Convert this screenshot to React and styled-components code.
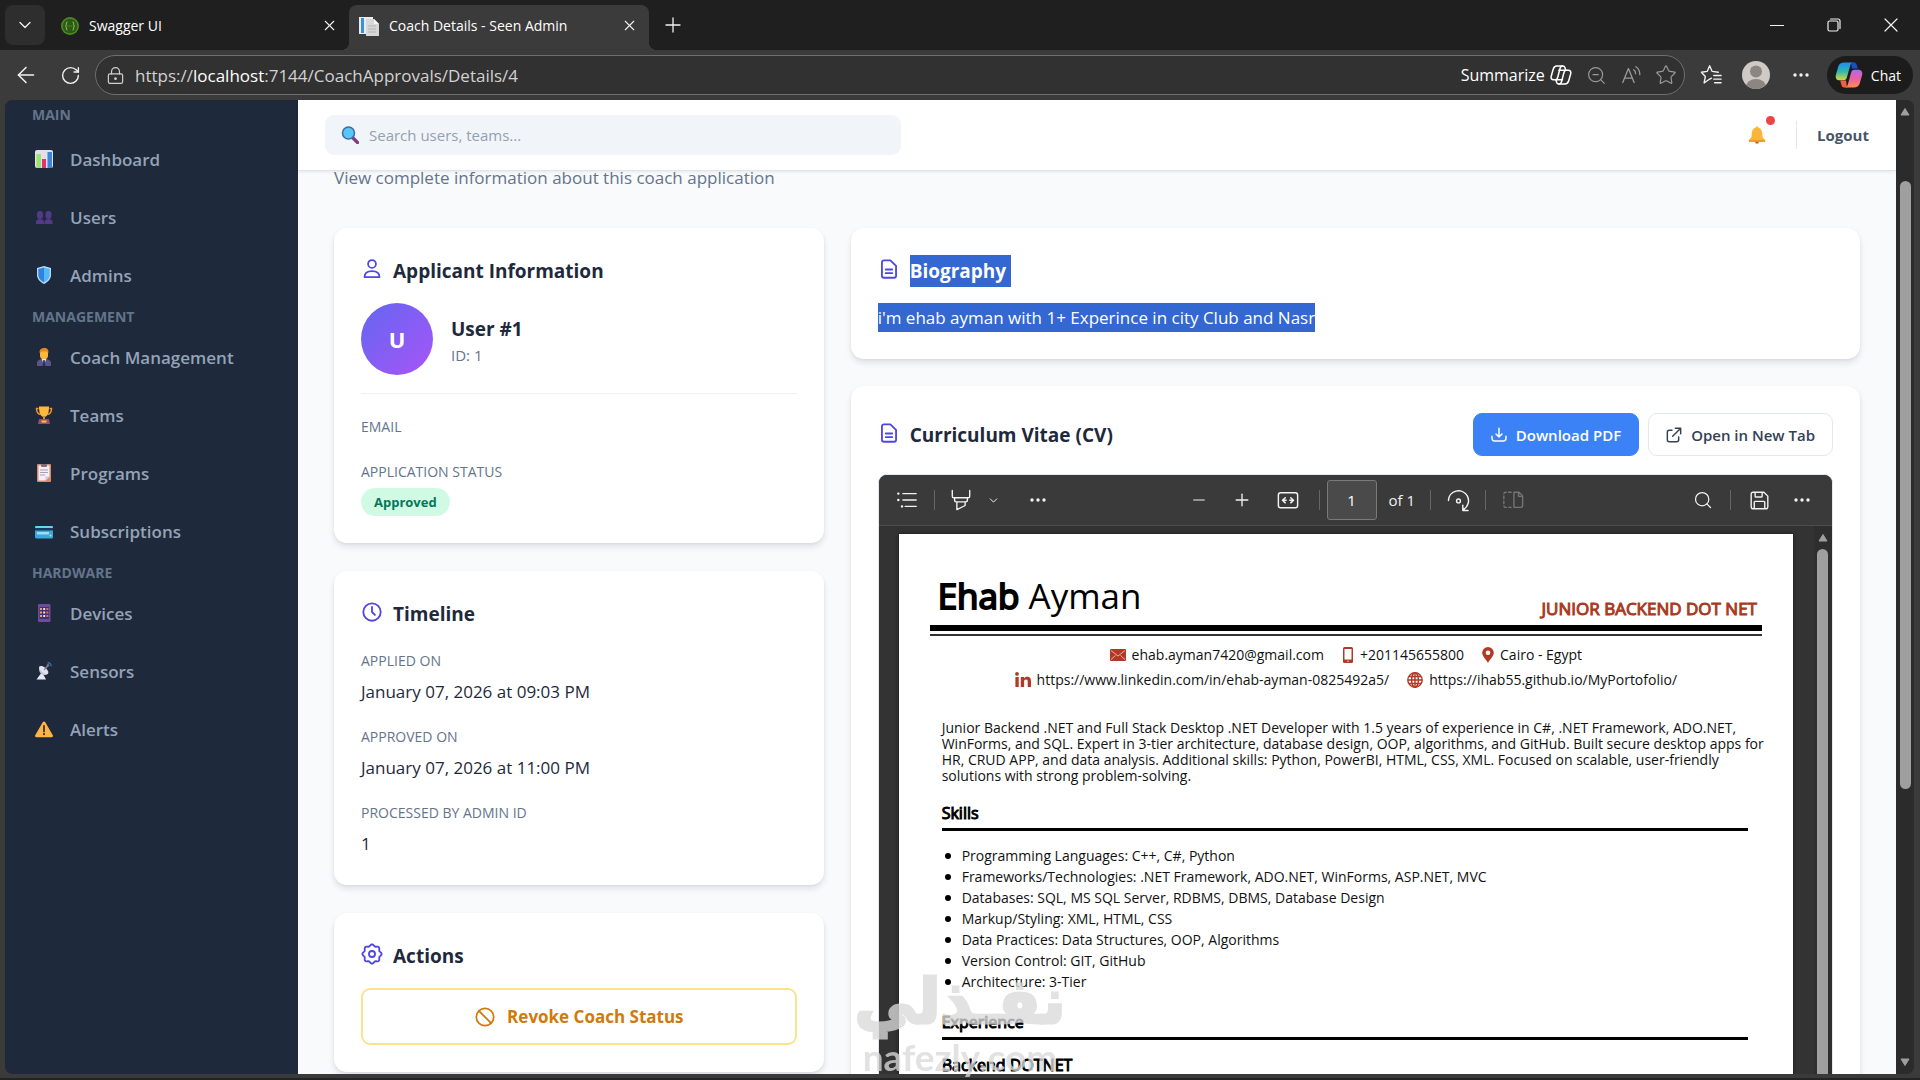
import React from "react";
import styled, { createGlobalStyle, css } from "styled-components";
import {
  ArrowLeft, ChevronDown, X, Plus, Minus, RotateCw, LockKeyhole, ZoomOut, Star, Search,
} from "lucide-react";

const ui = `"Open Sans", "Noto Sans", sans-serif`;

const GlobalStyle = createGlobalStyle`
  * { box-sizing: border-box; }
  body { margin: 0; background: #3b3b3b; font-family: ${ui}; }
  button, input { font-family: inherit; }
  h1, h2, h3, p, ul, dl, dd, dt { margin: 0; padding: 0; }
`;

/* ---------- browser frame ---------- */

const Window = styled.div`
  display: flex;
  flex-direction: column;
  height: 100vh;
  background: #3b3b3b;
  overflow: hidden;
`;

const TabStrip = styled.div`
  display: flex;
  align-items: flex-end;
  flex: none;
  height: 50px;
  padding-left: 5px;
  background: #1f1f1f;
  color: #fff;
`;

const IconButton = styled.button`
  display: flex;
  align-items: center;
  justify-content: center;
  flex: none;
  width: ${(p) => p.$w || 40}px;
  height: ${(p) => p.$h || 40}px;
  padding: 0;
  border: 0;
  border-radius: 8px;
  background: ${(p) => p.$bg || "transparent"};
  color: ${(p) => p.$color || "#f2f2f2"};
`;

const TabMenu = styled(IconButton)`
  align-self: center;
`;

const Tabs = styled.div`
  display: flex;
  padding-left: 4px;
`;

const Tab = styled.div`
  position: relative;
  display: flex;
  align-items: center;
  gap: 10px;
  width: 300px;
  height: 45px;
  padding: 0 0 4px ${(p) => (p.$active ? 10 : 12)}px;
  font-size: 14px;
  ${(p) => p.$active && css`
    background: #3b3b3b;
    border-radius: 8px 8px 0 0;
    &::before, &::after {
      content: "";
      position: absolute;
      bottom: 0;
      width: 8px;
      height: 8px;
    }
    &::before { left: -8px; background: radial-gradient(circle at 0 0, transparent 8px, #3b3b3b 8px); }
    &::after { right: -8px; background: radial-gradient(circle at 100% 0, transparent 8px, #3b3b3b 8px); }
  `}
`;

const TabTitle = styled.span`
  flex: 1;
  white-space: nowrap;
`;

const WindowControls = styled.div`
  display: flex;
  align-self: stretch;
  align-items: center;
  margin-left: auto;
`;

const Toolbar = styled.div`
  display: flex;
  align-items: center;
  flex: none;
  height: 50px;
  padding: 0 7px 0 3px;
  color: #fff;
`;

const AddressBar = styled.div`
  display: flex;
  align-items: center;
  flex: 1;
  height: 40px;
  margin: 0 4px 0 2px;
  padding-left: 10px;
  border: 1px solid #6e6e6e;
  border-radius: 20px;
  background: #313131;
`;

const Url = styled.span`
  flex: 1;
  margin-left: 10px;
  font-size: 17px;
  color: #d2d2d2;
  b { font-weight: 400; color: #fff; }
`;

const Summarize = styled.button`
  display: flex;
  align-items: center;
  gap: 4px;
  margin-right: 6px;
  padding: 0;
  border: 0;
  background: none;
  font-size: 16px;
  color: #fff;
`;

const ChatButton = styled.button`
  display: flex;
  align-items: center;
  gap: 8px;
  height: 38px;
  margin-left: 3px;
  padding: 0 12px 0 8px;
  border: 0;
  border-radius: 19px;
  background: #1c1c1c;
  font-size: 14px;
  color: #fff;
`;

const Viewport = styled.div`
  display: flex;
  flex: 1;
  min-height: 0;
  margin: 0 6px 0 5px;
  border-radius: 8px;
  overflow: hidden;
  background: #2b2b2b;
`;

const FrameEdge = styled.div`
  flex: none;
  height: 6px;
  border-bottom: 2px solid #232323;
  background: #3a3a3a;
`;

const ScrollTrack = styled.div`
  display: flex;
  flex-direction: column;
  align-items: center;
  flex: none;
  gap: ${(p) => p.$gap || 0}px;
  width: 18px;
  padding: 7px 0;
  background: ${(p) => p.$bg || "#2b2b2b"};
`;

const Thumb = styled.div`
  width: 11px;
  border-radius: 6px;
  background: #9f9f9f;
  flex: ${(p) => p.$grow};
`;

const Spacer = styled.div`
  flex: ${(p) => p.$grow};
`;

/* ---------- application shell ---------- */

const Sidebar = styled.nav`
  flex: none;
  width: 293px;
  padding-top: 3px;
  background: #1e293b;
`;

const SideLabel = styled.h3`
  height: 24px;
  margin-bottom: ${(p) => (p.$first ? 3 : 0)}px;
  padding-left: 27px;
  font-size: 14px;
  font-weight: 700;
  line-height: ${(p) => (p.$first ? 24 : 26)}px;
  color: #64748b;
`;

const SideItem = styled.a`
  display: flex;
  align-items: center;
  gap: 17px;
  height: 58px;
  padding-left: 30px;
  font-size: 17px;
  font-weight: 600;
  color: #94a3b8;
  text-decoration: none;
`;

const Main = styled.div`
  display: flex;
  flex-direction: column;
  flex: 1;
  min-width: 0;
  background: #f8fafc;
`;

const Header = styled.header`
  display: flex;
  align-items: center;
  flex: none;
  height: 71px;
  padding: 0 27px;
  border-bottom: 1px solid #dfe4ea;
  background: #fff;
  box-shadow: 0 1px 3px rgba(0, 0, 0, 0.08);
  z-index: 1;
`;

const SearchBox = styled.label`
  display: flex;
  align-items: center;
  gap: 10px;
  flex: 0 1 576px;
  height: 40px;
  padding-left: 16px;
  border-radius: 9px;
  background: #f1f5f9;
`;

const SearchInput = styled.input`
  flex: 1;
  min-width: 0;
  padding: 0;
  border: 0;
  outline: 0;
  background: none;
  font-size: 15px;
  &::placeholder { color: #94a0af; opacity: 1; }
`;

const Bell = styled.button`
  position: relative;
  display: flex;
  margin-left: auto;
  padding: 0;
  border: 0;
  background: none;
  &::after {
    content: "";
    position: absolute;
    top: -10px;
    right: -9px;
    width: 9px;
    height: 9px;
    border-radius: 50%;
    background: #ef4444;
  }
`;

const Logout = styled.button`
  margin-left: 30px;
  padding: 4px 0 4px 20px;
  border: 0;
  border-left: 1px solid #e2e8f0;
  background: none;
  font-size: 15px;
  font-weight: 700;
  line-height: 20px;
  color: #475569;
`;

const Content = styled.main`
  flex: 1;
  min-height: 0;
  padding: 0 36px;
  overflow: hidden;
`;

const Subtitle = styled.p`
  margin-bottom: 43px;
  font-size: 17px;
  line-height: 14px;
  color: #64748b;
`;

const Columns = styled.div`
  display: grid;
  grid-template-columns: minmax(0, 49fr) minmax(0, 101fr);
  gap: 27px;
  align-items: start;
`;

const Column = styled.div`
  display: flex;
  flex-direction: column;
  gap: ${(p) => p.$gap}px;
`;

const Card = styled.section`
  padding: 27px;
  border-radius: 13px;
  background: #fff;
  box-shadow: 0 4px 6px rgba(15, 23, 42, 0.1), 0 1px 3px rgba(15, 23, 42, 0.05);
`;

const CardTitle = styled.h2`
  display: flex;
  align-items: center;
  gap: 10px;
  margin-bottom: ${(p) => (p.$inRow ? 0 : 16)}px;
  font-size: 19px;
  font-weight: 700;
  line-height: 32px;
  color: #1e293b;
  svg { color: #4f46e5; flex: none; margin-bottom: 4px; }
`;

const Selected = styled.mark`
  background: #3367d1;
  color: #fff;
  padding-right: ${(p) => p.$trail || 0}px;
`;

const Profile = styled.div`
  display: flex;
  align-items: center;
  gap: 18px;
  margin-bottom: 23px;
  padding-bottom: 18px;
  border-bottom: 1px solid #edf0f4;
`;

const Avatar = styled.div`
  display: flex;
  align-items: center;
  justify-content: center;
  width: 72px;
  height: 72px;
  border-radius: 50%;
  background: linear-gradient(135deg, #6366f1, #a855f7);
  font-size: 22px;
  font-weight: 700;
  color: #fff;
`;

const UserName = styled.h3`
  font-size: 19px;
  font-weight: 700;
  line-height: 32px;
  color: #1e293b;
`;

const UserId = styled.p`
  font-size: 15px;
  line-height: 20px;
  color: #64748b;
`;

const Fields = styled.dl`
  display: flex;
  flex-direction: column;
  gap: ${(p) => p.$gap}px;
  padding-top: ${(p) => p.$top || 0}px;
`;

const FieldLabel = styled.dt`
  font-size: 14px;
  font-weight: 500;
  line-height: 20px;
  color: #64748b;
`;

const FieldValue = styled.dd`
  padding-top: 6px;
  font-size: 17px;
  line-height: 29px;
  color: #1e293b;
`;

const Badge = styled.span`
  display: flex;
  align-items: center;
  width: fit-content;
  height: 28px;
  padding: 0 13px;
  border-radius: 14px;
  background: #d1fae5;
  font-size: 13px;
  font-weight: 700;
  color: #047857;
`;

const RevokeButton = styled.button`
  display: flex;
  align-items: center;
  justify-content: center;
  gap: 11px;
  width: 100%;
  height: 57px;
  border: 2px solid #fbe38e;
  border-radius: 9px;
  background: #fff;
  font-size: 17px;
  font-weight: 700;
  color: #d07a0c;
`;

const Bio = styled.p`
  font-size: 17px;
  line-height: 29px;
  mark { display: inline-block; }
`;

const CvHeader = styled.div`
  display: flex;
  align-items: center;
  justify-content: space-between;
  margin-bottom: 18px;
`;

const Buttons = styled.div`
  display: flex;
  gap: 9px;
`;

const LinkButton = styled.a`
  display: flex;
  align-items: center;
  gap: 9px;
  height: 43px;
  padding: 0 17px;
  border: 1px solid ${(p) => (p.$primary ? "#3b82f6" : "#e2e8f0")};
  border-radius: 9px;
  background: ${(p) => (p.$primary ? "#3b82f6" : "#fff")};
  font-size: 15px;
  font-weight: 600;
  color: ${(p) => (p.$primary ? "#fff" : "#334155")};
  text-decoration: none;
`;

/* ---------- pdf viewer ---------- */

const Viewer = styled.div`
  border: 1px solid #e2e8f0;
  border-radius: 9px 9px 0 0;
  overflow: hidden;
  background: #333;
`;

const PdfToolbar = styled.div`
  display: grid;
  grid-template-columns: 1fr auto 1fr;
  align-items: center;
  height: 51px;
  padding: 0 8px;
  border-bottom: 1px solid #4d4d4d;
  background: #3a3a3a;
  color: #f0f0f0;
`;

const Group = styled.div`
  display: flex;
  align-items: center;
  justify-content: ${(p) => (p.$end ? "flex-end" : "flex-start")};
`;

const Divider = styled.span`
  width: 1px;
  height: 20px;
  margin: 0 7px;
  background: #666;
`;

const Gap = styled.span`
  width: 10px;
`;

const PageInput = styled.input`
  width: 50px;
  height: 40px;
  border: 1px solid #7a7a7a;
  border-radius: 3px;
  background: #4a4a4a;
  text-align: center;
  font-size: 15px;
  color: #fff;
`;

const PageCount = styled.span`
  margin: 0 8px 0 12px;
  font-size: 15px;
`;

const PdfBody = styled.div`
  display: flex;
  height: 700px;
`;

const Sheet = styled.article`
  flex: 1;
  min-width: 0;
  margin: 8px 21px 0 20px;
  padding: 38px 31px 0;
  background: #fff;
  color: #111;
  font-size: 14px;
  box-shadow: 0 0 4px rgba(0, 0, 0, 0.5);
`;

const CvTop = styled.div`
  display: flex;
  align-items: flex-end;
  justify-content: space-between;
  height: 53px;
  padding: 0 5px 0 8px;
`;

const CvName = styled.h1`
  align-self: flex-start;
  font-size: 35px;
  font-weight: 400;
  line-height: 48px;
  color: #000;
  b { font-weight: 400; -webkit-text-stroke: 2px #000; }
`;

const CvRole = styled.p`
  font-size: 17px;
  line-height: 33px;
  color: #a93a22;
  -webkit-text-stroke: 1px #a93a22;
`;

const DoubleRule = styled.div`
  height: 11px;
  margin-bottom: 6px;
  border-top: 6px solid #000;
  border-bottom: 2px solid #333;
`;

const ContactRow = styled.div`
  display: flex;
  justify-content: center;
  gap: 18px;
`;

const Contact = styled.span`
  display: flex;
  align-items: center;
  gap: 6px;
  line-height: 25px;
`;

const CvSection = styled.div`
  padding: 0 14px 0 12px;
`;

const Summary = styled.p`
  margin-top: 28px;
  line-height: 16px;
  white-space: nowrap;
`;

const CvHeading = styled.h2`
  margin-top: ${(p) => p.$top}px;
  padding: 0 0 4px;
  border-bottom: 3px solid #000;
  font-size: 16px;
  font-weight: 400;
  line-height: 22px;
  color: #000;
  -webkit-text-stroke: 1px #000;
`;

const CvList = styled.ul`
  padding: 14px 0 0 20px;
  line-height: 21px;
  list-style: none;
  li { position: relative; }
  li::before {
    content: "";
    position: absolute;
    left: -17px;
    top: 8px;
    width: 6px;
    height: 6px;
    border-radius: 50%;
    background: #000;
  }
`;

const CvJob = styled.h3`
  margin-top: 14px;
  font-size: 16px;
  font-weight: 400;
  line-height: 22px;
  color: #000;
  -webkit-text-stroke: 1px #000;
`;

const Watermark = styled.div`
  position: fixed;
  left: 853px;
  bottom: 0;
  width: 214px;
  height: 112px;
  color: #dadada;
  opacity: 0.78;
  text-align: center;
  pointer-events: none;
  z-index: 5;
`;

const WatermarkArabic = styled.div`
  height: 72px;
  font-family: "DejaVu Sans", sans-serif;
  font-size: 62px;
  font-weight: 700;
  line-height: 68px;
  white-space: nowrap;
  -webkit-text-stroke: 3px #dadada;
`;

const WatermarkLatin = styled.div`
  font-family: Lato, sans-serif;
  font-size: 37px;
  font-weight: 700;
  line-height: 34px;
`;

/* ---------- drawings ---------- */

const Icon = ({ size = 20, box = 24, stroke = 1.6, children, ...rest }) => (
  <svg width={size} height={size} viewBox={`0 0 ${box} ${box}`} fill="none" stroke="currentColor"
    strokeWidth={stroke} strokeLinecap="round" strokeLinejoin="round" aria-hidden="true" {...rest}>
    {children}
  </svg>
);

const Art = ({ size = 18, children }) => (
  <svg width={size} height={size} viewBox="0 0 18 18" aria-hidden="true">{children}</svg>
);

const art = {
  chart: (
    <Art>
      <rect width="18" height="18" rx="2" fill="#e4dfea" />
      <rect x="1.5" y="4" width="4.5" height="14" fill="#9be36d" />
      <rect x="7" y="9" width="4" height="9" fill="#e8306f" />
      <rect x="12.5" y="2" width="4.5" height="16" fill="#3b88d8" />
    </Art>
  ),
  users: (
    <Art>
      <g fill="#533a86">
        <rect x="2" y="3" width="6" height="8" rx="3" /><rect x="10.5" y="3" width="6" height="8" rx="3" />
        <path d="M1 16v-2c0-2 2-3 4-3s4 1 4 3v2zM9.5 16v-2c0-2 2-3 4-3s4 1 4 3v2z" />
      </g>
    </Art>
  ),
  shield: (
    <Art>
      <path d="M9 0l7 2v7c0 4-3 7-7 9-4-2-7-5-7-9V2z" fill="#b9dcf5" />
      <path d="M9 1.5L3.3 3v6c0 3 2.500 5.800 5.700 7.400z" fill="#2f83e0" />
      <path d="M9 1.500L14.700 3v6c0 3-2.500 5.800-5.700 7.400z" fill="#55b8fa" />
    </Art>
  ),
  coach: (
    <Art>
      <path d="M2 18v-3c0-3 3-4 7-4s7 1 7 4v3z" fill="#5b5587" />
      <path d="M6.500 10.500h5L9 17z" fill="#dfe3f2" />
      <path d="M8.300 12h1.400l.6 6H7.700z" fill="#27324f" />
      <rect x="5" y="1.500" width="8" height="9.500" rx="3.500" fill="#fbb838" />
      <path d="M4.600 5C4 1 7 0 9.500 0S14 1.500 13.400 5L12 3.500H7z" fill="#e58a1f" />
    </Art>
  ),
  trophy: (
    <Art>
      <path d="M3.500 2.500H1.500c0 4 1.500 5.500 4 6M14.500 2.500h2c0 4-1.500 5.500-4 6" fill="none" stroke="#e9982b" strokeWidth="1.500" />
      <path d="M4 .5h10c0 6-1 10-5 10.500C5 10.500 4 6.500 4 .5z" fill="#fdb93c" />
      <rect x="8" y="10" width="2" height="4" fill="#e08a28" />
      <path d="M4 13h10l1 5H3z" fill="#9a4e62" /><rect x="6.500" y="14.500" width="5" height="2" fill="#f8c24c" />
    </Art>
  ),
  clipboard: (
    <Art>
      <rect x="2" y="0" width="14" height="18" rx="1" fill="#d98b6a" />
      <path d="M3.500 1.500h11v11l-4 4h-7z" fill="#f3eef7" />
      <path d="M10.500 16.500v-4h4z" fill="#cfc6dc" />
      <rect x="6" y="0" width="6" height="3" rx="1" fill="#77717f" />
      <path d="M5 6h8M5 8.500h8M5 11h5" stroke="#a79fb5" strokeWidth="1" />
    </Art>
  ),
  card: (
    <Art>
      <rect y="4.500" width="18" height="12" rx="1.500" fill="#36a9dd" />
      <rect y="4" width="18" height="2" rx="1" fill="#66d4f2" />
      <rect y="6" width="18" height="2.500" fill="#1a3c5c" />
      <rect x="2" y="10" width="12" height="2.500" fill="#9fdcf0" /><circle cx="15.500" cy="13.500" r="1" fill="#f5d64e" />
    </Art>
  ),
  device: (
    <Art>
      <rect x="3" y="0" width="12.500" height="18" rx="1" fill="#6c4d9c" />
      <rect x="4.500" y="3" width="9.500" height="12" fill="#42306e" />
      {[4, 7.500, 11].map((y) => (
        <g key={y}>
          <rect x="5" y={y} width="2" height="2" fill="#f2a05a" />
          <rect x="8.200" y={y} width="2" height="2" fill="#d8e4fa" />
          <rect x="11.400" y={y} width="2" height="2" fill="#ea6a5f" />
        </g>
      ))}
    </Art>
  ),
  antenna: (
    <Art>
      <path d="M7 10l-5.500 7.500h9.500z" fill="#e8e8f2" />
      <path d="M4.500 4.500c-1.500 3.500.5 8 4.500 8.500 1.800.2 3-.3 4-1.500z" fill="#c4c5dc" />
      <ellipse cx="8.800" cy="8" rx="2.600" ry="5.600" transform="rotate(-50 8.800 8)" fill="#e2e2ee" />
      <path d="M9 8l4-4.500" stroke="#8a8aa4" strokeWidth="1.200" />
      <circle cx="13" cy="3.300" r="1.200" fill="#7a7a92" />
      <path d="M12.500.8a3 3 0 013.500 3.500" stroke="#2d77c9" strokeWidth="1.300" fill="none" />
    </Art>
  ),
  alert: (
    <Art>
      <path d="M9 1.500c.6 0 1 .3 1.300.8l7.500 13c.5 1-.1 1.900-1.200 1.900H1.400C.3 17.200-.3 16.300.2 15.300l7.500-13c.3-.5.700-.8 1.300-.8z" fill="#fdb643" />
      <path d="M9 6v5.500" stroke="#45302c" strokeWidth="1.800" strokeLinecap="round" /><circle cx="9" cy="14.200" r="1.100" fill="#45302c" />
    </Art>
  ),
  search: (
    <Art>
      <path d="M11.500 11.500l5 5" stroke="#7c3f7c" strokeWidth="3.200" strokeLinecap="round" />
      <circle cx="7.500" cy="7" r="6" fill="#5cc5f7" stroke="#3d6fa8" strokeWidth="1.600" />
    </Art>
  ),
  bell: (
    <Art>
      <circle cx="9" cy="15.700" r="2" fill="#b86a1d" />
      <path d="M9 .5c.9 0 1.400.6 1.500 1.200C13 2.400 14 4.500 14.200 7l.3 4 2.600 3c.5 1 .2 1.800-.7 1.800H1.600c-.9 0-1.200-.8-.7-1.800l2.600-3 .3-4C4 4.500 5 2.400 7.500 1.700 7.600 1.100 8.100.5 9 .5z" fill="#fcb53b" />
      <path d="M1 14.200h16c.2 1-.1 1.600-.7 1.600H1.700c-.6 0-.9-.6-.7-1.600z" fill="#e8912a" />
    </Art>
  ),
};

/* outline of the eight-toothed gear, sampled round the circle */
const gearPath = `M${Array.from({ length: 96 }, (_, i) => {
  const t = (i / 96) * Math.PI * 2;
  const r = 9.6 + 0.9 * Math.cos(8 * t);
  return `${(12 + r * Math.cos(t)).toFixed(2)} ${(12 + r * Math.sin(t)).toFixed(2)}`;
}).join("L")}z`;

const PersonIcon = () => (
  <Icon size={22} stroke={1.900}><circle cx="12" cy="6.500" r="4.300" /><path d="M3.800 20.800c0-4.300 3.300-6.600 8.200-6.600s8.200 2.300 8.200 6.600z" /></Icon>
);
const DocIcon = () => (
  <Icon size={22} stroke={2}><path d="M13.500 2.500H6.500A2.200 2.200 0 004.300 4.700v14.600a2.200 2.200 0 002.200 2.200h11a2.200 2.200 0 002.200-2.200V8.500z" /><path d="M8.500 12.500h7M8.500 16.500h7" /></Icon>
);
const ClockIcon = () => (
  <Icon size={22} stroke={2}><circle cx="12" cy="12" r="9.500" /><path d="M12 6.500V12l3.200 3.200" /></Icon>
);
const GearIcon = () => (
  <Icon size={22} stroke={2}><path d={gearPath} /><circle cx="12" cy="12" r="3.300" /></Icon>
);
const Dots = () => (
  <svg width="18" height="6" viewBox="0 0 18 6" fill="currentColor" aria-hidden="true">
    <circle cx="3" cy="3" r="1.700" /><circle cx="9" cy="3" r="1.700" /><circle cx="15" cy="3" r="1.700" />
  </svg>
);
const Arrow = ({ down }) => (
  <svg width="10" height="10" viewBox="0 0 10 10" aria-hidden="true">
    <path d={down ? "M1 2h8L5 8.500z" : "M1 8h8L5 1.500z"} fill="#9f9f9f" stroke="#9f9f9f" strokeLinejoin="round" />
  </svg>
);
const CopilotOutline = () => (
  <Icon size={24} stroke={1.500}>
    <path d="M7.500 3h6.200c1.300 0 2 .8 2.300 1.800l.7 2.400h2.600c2 0 3 1.600 2.400 3.600l-2 7c-.6 2-1.600 3.200-3.600 3.200H9.900c-1.300 0-2-.8-2.300-1.800L7 16.800H4.600c-2 0-3-1.600-2.400-3.600l2-7C4.800 4.200 5.500 3 7.500 3z" />
    <path d="M13.500 3c-1.500 0-2.100 1-2.500 2.500L8.800 14c-.4 1.600-1 2.800-2.300 2.800M10 21c1.500 0 2.200-1 2.600-2.500l2.200-8.500c.4-1.600.8-2.800 2.300-2.800M9.800 7.200h6.500M7.500 16.800h6" />
  </Icon>
);
const CopilotLogo = () => (
  <svg width="28" height="28" viewBox="0 0 28 28" aria-hidden="true">
    <defs>
      <linearGradient id="cpA" x1="0" y1="0" x2="0" y2="1"><stop offset="0" stopColor="#1d8df0" /><stop offset=".5" stopColor="#2fb7b0" /><stop offset="1" stopColor="#d9d93a" /></linearGradient>
      <linearGradient id="cpB" x1="0" y1="0" x2="0" y2="1"><stop offset="0" stopColor="#a86bf5" /><stop offset=".5" stopColor="#ee5fa0" /><stop offset="1" stopColor="#ff8a4c" /></linearGradient>
    </defs>
    <path d="M16 1.500h3c1.500 0 2.200.8 2.600 2l1.200 4H17z" fill="#1750c8" />
    <path d="M9.500 1.500H18c-1.500 0-2.300 1.200-2.800 3L12 16c-.6 2.200-1.500 3.300-3.500 3.300H4.800C1.500 19.300 0 17 1 13.500L3.300 5.500C4.100 2.800 6 1.500 9.500 1.500z" fill="url(#cpA)" />
    <path d="M12 26.500H9.200c-1.500 0-2.200-.8-2.600-2l-1.400-5H11z" fill="#f2603e" />
    <path d="M18.500 26.500H10c1.500 0 2.300-1.200 2.800-3L16 12c.6-2.200 1.500-3.300 3.500-3.300h3.700c3.300 0 4.800 2.300 3.800 5.800l-2.300 8c-.8 2.700-2.700 4-6.200 4z" fill="url(#cpB)" />
  </svg>
);

/* ---------- data ---------- */

const menu = [
  ["MAIN", [["chart", "Dashboard"], ["users", "Users"], ["shield", "Admins"]]],
  ["MANAGEMENT", [["coach", "Coach Management"], ["trophy", "Teams"], ["clipboard", "Programs"], ["card", "Subscriptions"]]],
  ["HARDWARE", [["device", "Devices"], ["antenna", "Sensors"], ["alert", "Alerts"]]],
];

const timeline = [
  ["APPLIED ON", "January 07, 2026 at 09:03 PM"],
  ["APPROVED ON", "January 07, 2026 at 11:00 PM"],
  ["PROCESSED BY ADMIN ID", "1"],
];

const skills = [
  "Programming Languages: C++, C#, Python",
  "Frameworks/Technologies: .NET Framework, ADO.NET, WinForms, ASP.NET, MVC",
  "Databases: SQL, MS SQL Server, RDBMS, DBMS, Database Design",
  "Markup/Styling: XML, HTML, CSS",
  "Data Practices: Data Structures, OOP, Algorithms",
  "Version Control: GIT, GitHub",
  "Architecture: 3-Tier",
];

const red = "#b03a26";

/* ---------- parts ---------- */

const BrowserChrome = () => (
  <>
    <TabStrip>
      <TabMenu $bg="#2e2e2e" aria-label="Tab menu"><ChevronDown size={20} strokeWidth={1.500} /></TabMenu>
      <Tabs>
        <Tab>
          <svg width="18" height="18" viewBox="0 0 18 18" aria-hidden="true">
            <circle cx="9" cy="9" r="9" fill="#4c8a26" /><circle cx="9" cy="9" r="7.300" fill="#2c5a14" />
            <path d="M6.500 5c-1.500 0-1 1.500-1.200 2.800C5.200 8.600 4.500 9 4.500 9s.7.400.8 1.200C5.500 11.500 5 13 6.500 13M11.500 5c1.500 0 1 1.500 1.200 2.800.1.800.8 1.200.8 1.200s-.7.400-.8 1.200c-.2 1.300.3 2.800-1.200 2.800" stroke="#8fd05c" fill="none" />
            <path d="M6.800 9h.6M8.700 9h.6M10.600 9h.6" stroke="#8fd05c" />
          </svg>
          <TabTitle>Swagger UI</TabTitle>
          <IconButton aria-label="Close tab"><X size={17} strokeWidth={1.500} /></IconButton>
        </Tab>
        <Tab $active>
          <svg width="20" height="20" viewBox="0 0 20 20" aria-hidden="true">
            <rect x="0" y="1" width="14" height="17" fill="#e9edf2" /><rect x="2" y="2" width="3" height="15" fill="#3d8fd6" />
            <path d="M7 3h8l5 5v12H7z" fill="#d8d8d8" /><path d="M15 3v5h5z" fill="#f8f8f8" />
            <path d="M9 10h8M9 13h8M9 16h8" stroke="#b4b4b4" />
          </svg>
          <TabTitle>Coach Details - Seen Admin</TabTitle>
          <IconButton aria-label="Close tab"><X size={17} strokeWidth={1.500} /></IconButton>
        </Tab>
      </Tabs>
      <TabMenu $w={48} aria-label="New tab"><Plus size={24} strokeWidth={1.300} /></TabMenu>
      <WindowControls>
        <IconButton $w={57} aria-label="Minimize"><Icon size={14} box={14} stroke={1}><path d="M0 7.500h14" /></Icon></IconButton>
        <IconButton $w={57} aria-label="Restore">
          <Icon size={14} box={14} stroke={1.200}><rect x="1" y="3" width="10" height="10" rx="1.500" /><path d="M3.500 1h7.500a2 2 0 012 2v7.500" /></Icon>
        </IconButton>
        <IconButton $w={58} aria-label="Close"><Icon size={14} box={14} stroke={1.200}><path d="M1 1l12 12M13 1L1 13" /></Icon></IconButton>
      </WindowControls>
    </TabStrip>
    <Toolbar>
      <IconButton $w={45} aria-label="Back"><ArrowLeft size={26} strokeWidth={1.400} /></IconButton>
      <IconButton $w={45} aria-label="Reload"><RotateCw size={21} strokeWidth={1.600} /></IconButton>
      <AddressBar>
        <LockKeyhole size={19} strokeWidth={1.500} color="#d0d0d0" />
        <Url>https://<b>localhost</b>:7144/CoachApprovals/Details/4</Url>
        <Summarize>Summarize<CopilotOutline /></Summarize>
        <IconButton $w={35} $color="#9a9a9a" aria-label="Zoom"><ZoomOut size={21} strokeWidth={1.300} /></IconButton>
        <IconButton $w={35} $color="#9a9a9a" aria-label="Read aloud">
          <Icon size={21} stroke={1.500}><path d="M2 20L8.500 4 15 20M4.500 15h8M14.500 5.500c1.500 1 2.200 2.500 2.200 4.500M17 2c3 2 4.500 5 4.500 9" /></Icon>
        </IconButton>
        <IconButton $w={35} $color="#9a9a9a" aria-label="Favorite"><Star size={22} strokeWidth={1.300} /></IconButton>
      </AddressBar>
      <IconButton $w={45} aria-label="Favorites">
        <Icon size={22} stroke={1.500}><path d="M12.500 15.500l-2.300 1.200-5.700 4 1.300-7L1.500 9l6.300-.9L10.500 2l2.800 6.100L20 9M15 12.500h8M15 16.500h8M16 20.500h7" /></Icon>
      </IconButton>
      <IconButton $w={45} aria-label="Profile">
        <svg width="28" height="28" viewBox="0 0 28 28" aria-hidden="true">
          <clipPath id="pf"><circle cx="14" cy="14" r="14" /></clipPath>
          <g clipPath="url(#pf)"><rect width="28" height="28" fill="#cfcac6" /><circle cx="14" cy="10.500" r="6" fill="#8b8682" /><ellipse cx="14" cy="26" rx="10" ry="8" fill="#8b8682" /></g>
        </svg>
      </IconButton>
      <IconButton $w={45} aria-label="More"><Dots /></IconButton>
      <ChatButton><CopilotLogo />Chat</ChatButton>
    </Toolbar>
  </>
);

const PdfViewer = () => (
  <Viewer>
    <PdfToolbar>
      <Group>
        <IconButton aria-label="Contents">
          <Icon size={22} stroke={1.500}><path d="M7.500 5H22M7.500 12H22M10 19h12" /><path d="M2.500 5h.1M2.500 12h.1M6.500 19h.1" strokeWidth="2.600" /></Icon>
        </IconButton>
        <Divider />
        <IconButton $w={38} aria-label="Highlight">
          <Icon size={22} stroke={1.500}><path d="M2.500 1.500v6.300c0 1 .6 1.700 1.700 1.700h15.600c1.100 0 1.700-.7 1.700-1.700V1.500M5 9.500v2.500c0 1.200.7 2 2 2h10c1.300 0 2-.8 2-2V9.500M7.500 14v8.500l9-4.500v-4" /></Icon>
        </IconButton>
        <IconButton $w={28} aria-label="Highlight colours"><ChevronDown size={13} strokeWidth={1.800} /></IconButton>
        <Gap />
        <IconButton aria-label="More tools"><Dots /></IconButton>
      </Group>
      <Group>
        <IconButton $w={43} aria-label="Zoom out"><Minus size={18} strokeWidth={1.600} /></IconButton>
        <IconButton $w={43} aria-label="Zoom in"><Plus size={20} strokeWidth={1.600} /></IconButton>
        <IconButton $w={48} aria-label="Fit to width">
          <Icon size={22} stroke={1.600}><rect x="1.500" y="4" width="21" height="16.500" rx="2.500" /><path d="M9 9.500L6 12.300l3 2.800M15 9.500l3 2.800-3 2.800M6.500 12.300H10M14 12.300h3.500" /></Icon>
        </IconButton>
        <Divider />
        <PageInput aria-label="Page number" defaultValue="1" />
        <PageCount>of 1</PageCount>
        <Divider />
        <IconButton aria-label="Rotate">
          <Icon size={23} stroke={1.500}><path d="M1.500 12A10.500 10.500 0 0121 7a10.500 10.500 0 01-4 14.500M16.500 17v5.500H22" /><circle cx="12" cy="12.500" r="2" /></Icon>
        </IconButton>
        <Divider />
        <IconButton $color="#757575" aria-label="Page view">
          <Icon size={22} stroke={1.500}><path d="M13 3.500h5.500l4 4V18a2 2 0 01-2 2H13zM18 3.500V8h4.500" /><path d="M10 3.500H4a2 2 0 00-2 2V18a2 2 0 002 2h6" strokeDasharray="3 2.500" /></Icon>
        </IconButton>
      </Group>
      <Group $end>
        <IconButton aria-label="Find"><Search size={20} strokeWidth={1.500} /></IconButton>
        <Divider />
        <IconButton $w={43} aria-label="Save">
          <Icon size={21} stroke={1.600}><path d="M4.500 2.500H17L21.500 7v12.500a2 2 0 01-2 2h-15a2 2 0 01-2-2v-15a2 2 0 012-2zM7 2.500V7a1 1 0 001 1h6a1 1 0 001-1V2.500M6 21.500V14a1 1 0 011-1h10a1 1 0 011 1v7.500" /></Icon>
        </IconButton>
        <IconButton $w={43} aria-label="More actions"><Dots /></IconButton>
      </Group>
    </PdfToolbar>
    <PdfBody>
      <Sheet>
        <CvTop>
          <CvName><b>Ehab</b> Ayman</CvName>
          <CvRole>JUNIOR BACKEND DOT NET</CvRole>
        </CvTop>
        <DoubleRule />
        <ContactRow>
          <Contact>
            <svg width="16" height="12" viewBox="0 0 16 12" aria-hidden="true"><rect width="16" height="12" rx="1" fill={red} /><path d="M1 1.500l7 5.500 7-5.500M1 10.500l4.500-4M15 10.500l-4.500-4" stroke="#f3cfc6" strokeWidth=".8" fill="none" /></svg>
            ehab.ayman7420@gmail.com
          </Contact>
          <Contact>
            <svg width="12" height="16" viewBox="0 0 12 16" aria-hidden="true"><rect x="1" width="10" height="16" rx="1.500" fill={red} /><rect x="2.500" y="2" width="7" height="10.500" fill="#fff" /><circle cx="6" cy="14.300" r=".8" fill="#f3cfc6" /></svg>
            +201145655800
          </Contact>
          <Contact>
            <svg width="12" height="16" viewBox="0 0 12 16" aria-hidden="true"><path d="M6 0a5.800 5.800 0 015.800 5.800C11.800 9.500 8 12 6 16 4 12 .2 9.500.2 5.800A5.800 5.800 0 016 0z" fill={red} /><circle cx="6" cy="5.800" r="2.300" fill="#fff" /></svg>
            Cairo - Egypt
          </Contact>
        </ContactRow>
        <ContactRow>
          <Contact>
            <svg width="16" height="15" viewBox="0 0 16 15" aria-hidden="true"><g fill={red}><circle cx="2" cy="1.900" r="1.900" /><rect x=".4" y="5" width="3.300" height="10" /><path d="M5.800 5H9v1.400C9.500 5.400 10.700 4.800 12 4.800c3.300 0 4 2 4 4.800V15h-3.300v-4.900c0-1.200 0-2.500-1.700-2.500S9.100 8.900 9.100 10v5H5.800z" /></g></svg>
            https://www.linkedin.com/in/ehab-ayman-0825492a5/
          </Contact>
          <Contact>
            <svg width="16" height="16" viewBox="0 0 16 16" fill="none" stroke={red} strokeWidth="1.400" aria-hidden="true"><circle cx="8" cy="8" r="7.200" /><ellipse cx="8" cy="8" rx="3.400" ry="7.200" /><path d="M8 1v14M1 8h14M2 4.500h12M2 11.500h12" /></svg>
            https://ihab55.github.io/MyPortofolio/
          </Contact>
        </ContactRow>
        <CvSection>
          <Summary>
            Junior Backend .NET and Full Stack Desktop .NET Developer with 1.5 years of experience in C#, .NET Framework, ADO.NET,<br />
            WinForms, and SQL. Expert in 3-tier architecture, database design, OOP, algorithms, and GitHub. Built secure desktop apps for<br />
            HR, CRUD APP, and data analysis. Additional skills: Python, PowerBI, HTML, CSS, XML. Focused on scalable, user-friendly<br />
            solutions with strong problem-solving.
          </Summary>
          <CvHeading $top={18}>Skills</CvHeading>
          <CvList>{skills.map((s) => <li key={s}>{s}</li>)}</CvList>
          <CvHeading $top={19}>Experience</CvHeading>
          <CvJob>Backend DOTNET</CvJob>
        </CvSection>
      </Sheet>
      <ScrollTrack $bg="#2e2e2e" $gap={6}><Arrow /><Thumb $grow={1} /></ScrollTrack>
    </PdfBody>
  </Viewer>
);

export default function App() {
  return (
    <Window>
      <GlobalStyle />
      <BrowserChrome />
      <Viewport>
        <Sidebar>
          {menu.map(([label, items], i) => (
            <React.Fragment key={label}>
              <SideLabel $first={i === 0}>{label}</SideLabel>
              {items.map(([icon, text]) => <SideItem key={text} href="#">{art[icon]}{text}</SideItem>)}
            </React.Fragment>
          ))}
        </Sidebar>
        <Main>
          <Header>
            <SearchBox>{art.search}<SearchInput aria-label="Search" placeholder="Search users, teams..." /></SearchBox>
            <Bell aria-label="Notifications">{art.bell}</Bell>
            <Logout>Logout</Logout>
          </Header>
          <Content>
            <Subtitle>View complete information about this coach application</Subtitle>
            <Columns>
              <Column $gap={28}>
                <Card>
                  <CardTitle><PersonIcon />Applicant Information</CardTitle>
                  <Profile>
                    <Avatar>U</Avatar>
                    <div><UserName>User #1</UserName><UserId>ID: 1</UserId></div>
                  </Profile>
                  <Fields $gap={25}>
                    <div><FieldLabel>EMAIL</FieldLabel></div>
                    <div><FieldLabel>APPLICATION STATUS</FieldLabel><FieldValue><Badge>Approved</Badge></FieldValue></div>
                  </Fields>
                </Card>
                <Card>
                  <CardTitle><ClockIcon />Timeline</CardTitle>
                  <Fields $gap={21} $top={5}>
                    {timeline.map(([k, v]) => <div key={k}><FieldLabel>{k}</FieldLabel><FieldValue>{v}</FieldValue></div>)}
                  </Fields>
                </Card>
                <Card>
                  <CardTitle><GearIcon />Actions</CardTitle>
                  <RevokeButton>
                    <Icon size={22} stroke={1.900}><circle cx="12" cy="12" r="9.500" /><path d="M5.300 5.300l13.400 13.400" /></Icon>
                    Revoke Coach Status
                  </RevokeButton>
                </Card>
              </Column>
              <Column $gap={27}>
                <Card>
                  <CardTitle><DocIcon /><Selected $trail={5}>Biography</Selected></CardTitle>
                  <Bio><Selected>i'm ehab ayman with 1+ Experince in city Club and Nasr</Selected></Bio>
                </Card>
                <Card>
                  <CvHeader>
                    <CardTitle $inRow><DocIcon />Curriculum Vitae (CV)</CardTitle>
                    <Buttons>
                      <LinkButton $primary href="#">
                        <Icon size={16} stroke={2.200}><path d="M12 2v13M7.500 10.500L12 15l4.500-4.500M1.500 14v3a4 4 0 004 4h13a4 4 0 004-4v-3" /></Icon>
                        Download PDF
                      </LinkButton>
                      <LinkButton href="#">
                        <Icon size={16} stroke={2.200}><path d="M9 5H5a3 3 0 00-3 3v11a3 3 0 003 3h11a3 3 0 003-3v-4M14 2h8v8M22 2L10 14" /></Icon>
                        Open in New Tab
                      </LinkButton>
                    </Buttons>
                  </CvHeader>
                  <PdfViewer />
                </Card>
              </Column>
            </Columns>
          </Content>
        </Main>
        <ScrollTrack>
          <Arrow />
          <Spacer $grow={64} />
          <Thumb $grow={608} />
          <Spacer $grow={268} />
          <Arrow down />
        </ScrollTrack>
      </Viewport>
      <FrameEdge />
      <Watermark>
        <WatermarkArabic lang="ar" dir="rtl">نفـذلي</WatermarkArabic>
        <WatermarkLatin>nafezly.com</WatermarkLatin>
      </Watermark>
    </Window>
  );
}
